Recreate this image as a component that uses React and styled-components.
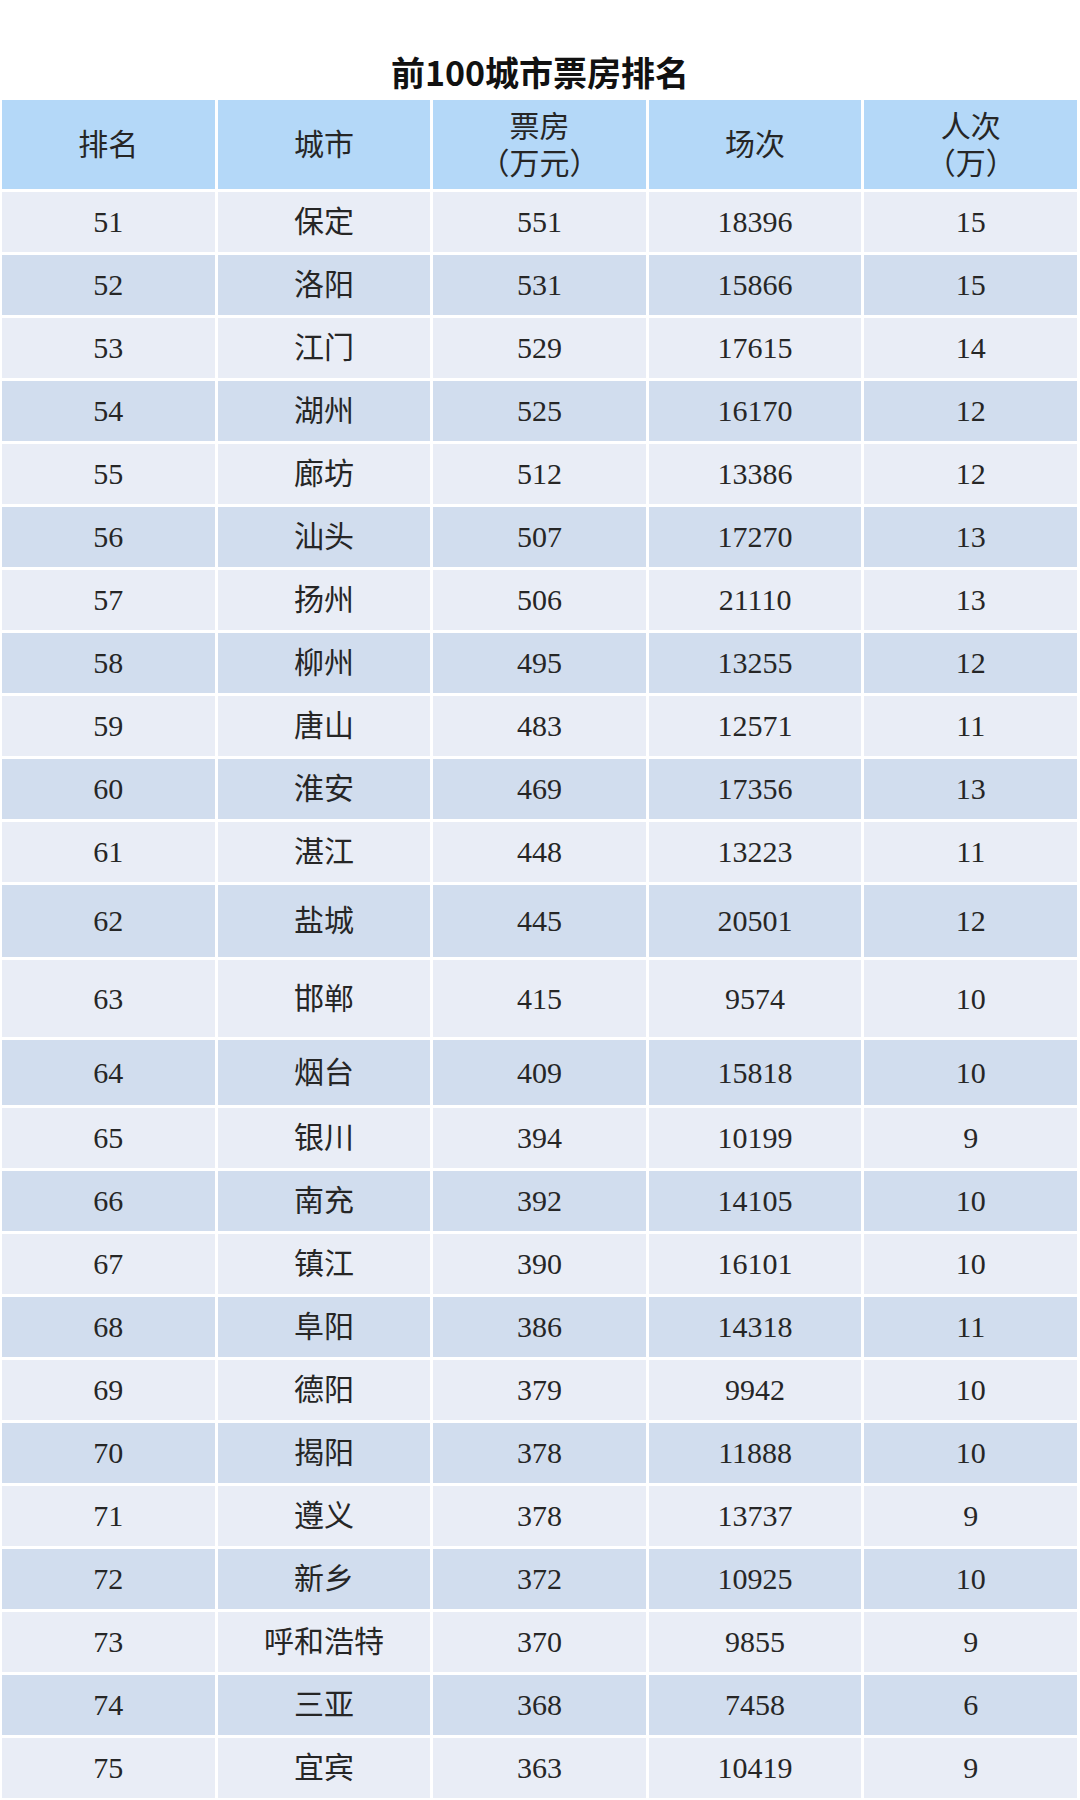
import React from 'react';
import styled, { createGlobalStyle } from 'styled-components';

const GlobalStyle = createGlobalStyle`
  html, body {
    margin: 0;
    padding: 0;
    background: #ffffff;
  }
`;

const Page = styled.div`
  width: 1080px;
  height: 1800px;
  overflow: hidden;
  background: #ffffff;
`;

const Title = styled.h1`
  margin: 0;
  height: 100px;
  box-sizing: border-box;
  padding-top: 42px;
  display: flex;
  align-items: center;
  justify-content: center;
  font-family: "Noto Sans CJK SC", "Noto Sans", sans-serif;
  font-size: 34px;
  font-weight: 700;
  color: #111111;
  letter-spacing: 0;
`;

const Table = styled.div`
  display: flex;
  flex-direction: column;
  gap: 3px;
  padding: 0 3px 0 2px;
`;

const Row = styled.div`
  display: grid;
  grid-template-columns: repeat(5, 1fr);
  gap: 3px;
  height: ${props => props.$h || 60}px;
`;

// header / light / dark backgrounds
const tones = {
  head: '#b4d8f8',
  light: '#e9edf6',
  dark: '#d1ddee',
};

const Cell = styled.div`
  display: flex;
  flex-direction: column;
  align-items: center;
  justify-content: center;
  background: ${props => tones[props.$tone]};
  font-family: "Liberation Serif", "Noto Sans CJK SC", serif;
  font-size: 30px;
  line-height: ${props => (props.$tone === 'head' ? 37 : 32)}px;
  color: #262626;
  text-align: center;
`;

const headers = [
  ['排名'],
  ['城市'],
  ['票房', '（万元）'],
  ['场次'],
  ['人次', '（万）'],
];

const rows = [
  [51, '保定', 551, 18396, 15],
  [52, '洛阳', 531, 15866, 15],
  [53, '江门', 529, 17615, 14],
  [54, '湖州', 525, 16170, 12],
  [55, '廊坊', 512, 13386, 12],
  [56, '汕头', 507, 17270, 13],
  [57, '扬州', 506, 21110, 13],
  [58, '柳州', 495, 13255, 12],
  [59, '唐山', 483, 12571, 11],
  [60, '淮安', 469, 17356, 13],
  [61, '湛江', 448, 13223, 11],
  [62, '盐城', 445, 20501, 12, 72],
  [63, '邯郸', 415, 9574, 10, 77],
  [64, '烟台', 409, 15818, 10, 65],
  [65, '银川', 394, 10199, 9],
  [66, '南充', 392, 14105, 10],
  [67, '镇江', 390, 16101, 10],
  [68, '阜阳', 386, 14318, 11],
  [69, '德阳', 379, 9942, 10],
  [70, '揭阳', 378, 11888, 10],
  [71, '遵义', 378, 13737, 9],
  [72, '新乡', 372, 10925, 10],
  [73, '呼和浩特', 370, 9855, 9],
  [74, '三亚', 368, 7458, 6],
  [75, '宜宾', 363, 10419, 9],
];

const App = () => {
  return (
    <Page>
      <GlobalStyle />
      <Title>前100城市票房排名</Title>
      <Table>
        <Row $h={89}>
          {headers.map((lines, i) => (
            <Cell key={i} $tone="head">
              {lines.map(l => <span key={l}>{l}</span>)}
            </Cell>
          ))}
        </Row>
        {rows.map((r, idx) => {
          const tone = idx % 2 === 0 ? 'light' : 'dark';
          return (
            <Row key={r[0]} $h={r[5]}>
              {r.slice(0, 5).map((v, i) => (
                <Cell key={i} $tone={tone}>{v}</Cell>
              ))}
            </Row>
          );
        })}
      </Table>
    </Page>
  );
};

export default App;
